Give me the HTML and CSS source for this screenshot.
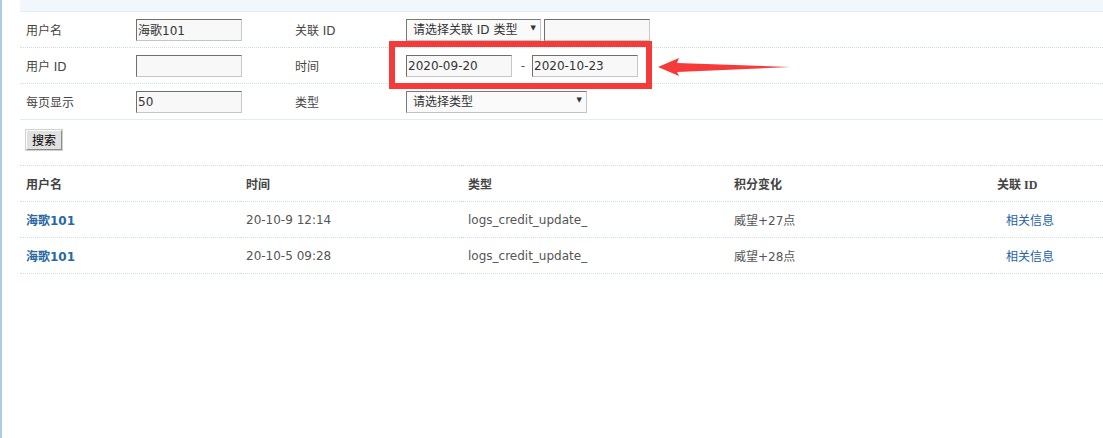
FILE: index.html
```html
<!DOCTYPE html>
<html lang="zh-CN">
<head>
<meta charset="utf-8">
<title>积分记录</title>
<link rel="stylesheet" href="styles.css">
</head>
<body>
<div class="page">
  <div class="topstrip"></div>
  <table class="form">
    <colgroup><col class="c1"><col class="c2"><col class="c3"><col></colgroup>
    <tr>
      <td>用户名</td>
      <td><input class="txt" type="text" value="海歌101"></td>
      <td>关联 ID</td>
      <td>
        <span class="sel sel-id"><select><option>请选择关联 ID 类型</option></select><span class="arrow">▼</span></span><input class="txt gap" type="text" value="">
      </td>
    </tr>
    <tr>
      <td>用户 ID</td>
      <td><input class="txt" type="text" value=""></td>
      <td>时间</td>
      <td class="datecell">
        <input class="txt" type="text" value="2020-09-20"><span class="dash">-</span><input class="txt" type="text" value="2020-10-23">
        <span class="redbox"></span>
        <svg class="pointer" width="140" height="24" viewBox="0 0 140 24" aria-hidden="true">
          <polygon points="0,10 21,1 19,6 132,10 19,15 21,19" fill="#f53a3a"/>
        </svg>
      </td>
    </tr>
    <tr>
      <td>每页显示</td>
      <td><input class="txt" type="text" value="50"></td>
      <td>类型</td>
      <td><span class="sel sel-type"><select><option>请选择类型</option></select><span class="arrow">▼</span></span></td>
    </tr>
    <tr class="btnrow">
      <td colspan="4"><button class="btn" type="button">搜索</button></td>
    </tr>
  </table>

  <table class="list">
    <colgroup><col class="l1"><col class="l2"><col class="l3"><col class="l4"><col></colgroup>
    <tr>
      <th>用户名</th><th>时间</th><th>类型</th><th>积分变化</th><th>关联 ID</th>
    </tr>
    <tr>
      <td><a class="name" href="#">海歌101</a></td>
      <td>20-10-9 12:14</td>
      <td>logs_credit_update_</td>
      <td>威望+27点</td>
      <td><a class="rel" href="#">相关信息</a></td>
    </tr>
    <tr>
      <td><a class="name" href="#">海歌101</a></td>
      <td>20-10-5 09:28</td>
      <td>logs_credit_update_</td>
      <td>威望+28点</td>
      <td><a class="rel" href="#">相关信息</a></td>
    </tr>
  </table>
</div>
</body>
</html>
```
FILE: styles.css
```css
html, body {
  margin: 0;
  padding: 0;
  background: #fff;
}
body {
  font-family: "DejaVu Sans", "Noto Sans CJK SC", sans-serif;
  font-size: 12px;
  color: #444;
}
.page {
  border-left: 2px solid #a9cfe1;
  min-height: 438px;
  box-sizing: border-box;
  padding-left: 18px;
}
.topstrip {
  height: 11px;
  background: #f1f7fc;
}
table {
  border-collapse: collapse;
  width: 100%;
}
.form td {
  border-top: 1px dotted #cddde9;
  height: 35px;
  padding: 0 0 0 6px;
  vertical-align: middle;
  white-space: nowrap;
}
.form col.c1 { width: 110px; }
.form col.c2 { width: 159px; }
.form col.c3 { width: 111px; }
.form tr:first-child td { border-top: 1px solid #e4edf5; }

.txt {
  box-sizing: border-box;
  width: 106px;
  height: 22px;
  margin: 0;
  padding: 0 0 0 1px;
  border: 1px solid;
  border-color: #6f6f6f #c6c6c6 #c6c6c6 #6f6f6f;
  background: #f8f8f8;
  font-family: "DejaVu Sans", "Noto Sans CJK SC", sans-serif;
  font-size: 12px;
  color: #333;
  vertical-align: middle;
}
.txt.gap { margin-left: 3px; }

.sel {
  position: relative;
  display: inline-block;
  vertical-align: middle;
}
.sel select {
  -webkit-appearance: none;
  appearance: none;
  box-sizing: border-box;
  height: 22px;
  margin: 0;
  padding: 0 0 0 6px;
  border: 1px solid;
  border-color: #7a7a7a #c3c3c3 #c3c3c3 #7a7a7a;
  border-radius: 0;
  background: #fafafa;
  font-family: "DejaVu Sans", "Noto Sans CJK SC", sans-serif;
  font-size: 12px;
  color: #333;
  display: block;
}
.sel-id select { width: 135px; }
.sel-type select { width: 181px; }
.sel .arrow {
  position: absolute;
  top: 5px;
  right: 5px;
  font-size: 7px;
  color: #333;
  pointer-events: none;
}

.datecell { position: relative; }
.dash {
  display: inline-block;
  width: 20px;
  padding-left: 2px;
  box-sizing: border-box;
  text-align: center;
  vertical-align: middle;
  color: #555;
}
.redbox {
  position: absolute;
  left: -11px;
  top: -7px;
  width: 251px;
  height: 36px;
  border: 6px solid #f53a3a;
}
.pointer {
  position: absolute;
  left: 258px;
  top: 9px;
}

.btnrow td {
  border-top: 1px solid #e0ebf4;
  height: auto;
  padding: 10px 0 15px 6px;
}
.btn {
  box-sizing: border-box;
  height: 20px;
  width: 36px;
  margin: 0;
  padding: 0;
  border: 1px solid;
  border-color: #fff #8c8c8c #8c8c8c #fff;
  outline: 1px solid #d0d0d0;
  background: #e1e1e1;
  font-family: "Noto Sans CJK SC", sans-serif;
  font-size: 12px;
  color: #000;
  line-height: 16px;
}

.list col.l1 { width: 220px; }
.list col.l2 { width: 222px; }
.list col.l3 { width: 266px; }
.list col.l4 { width: 263px; }
.list th, .list td {
  height: 35px;
  padding: 0 0 0 6px;
  text-align: left;
  vertical-align: middle;
  border-bottom: 1px dotted #cddde9;
  white-space: nowrap;
}
.list tr:first-child th { border-top: 1px dotted #cddde9; }
.list th {
  font-family: "Liberation Serif", "Noto Sans CJK SC", serif;
  font-weight: bold;
  font-size: 12px;
  color: #444;
}
.list td { color: #555; }
.name {
  font-weight: bold;
  color: #2a67a1;
  text-decoration: none;
}
.rel {
  color: #2463a6;
  text-decoration: none;
  margin-left: 9px;
}
```
